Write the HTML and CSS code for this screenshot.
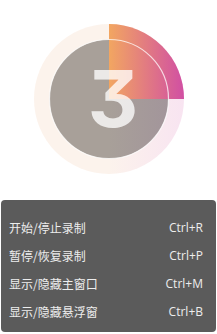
FILE: index.html
```html
<!DOCTYPE html>
<html lang="zh-CN">
<head>
    <meta charset="UTF-8">
    <title>录制倒计时</title>
    <link rel="stylesheet" href="styles.css">
</head>
<body>
    <!-- Countdown dial -->
    <div class="dial-section">
        <svg class="dial" width="150" height="150" viewBox="0 0 150 150">
            <defs>
                <linearGradient id="accent" x1="0" y1="0" x2="150" y2="0" gradientUnits="userSpaceOnUse">
                    <stop offset="0.5" stop-color="#f2a661"/>
                    <stop offset="1" stop-color="#d14fa3"/>
                </linearGradient>
                <linearGradient id="ringFade" x1="0" y1="0" x2="150" y2="0" gradientUnits="userSpaceOnUse">
                    <stop offset="0.5" stop-color="#fcf3ec"/>
                    <stop offset="1" stop-color="#f8e4f1"/>
                </linearGradient>
                <linearGradient id="core" x1="0" y1="0" x2="150" y2="0" gradientUnits="userSpaceOnUse">
                    <stop offset="0.5" stop-color="#a8a099"/>
                    <stop offset="1" stop-color="#a1929b"/>
                </linearGradient>
            </defs>
            <circle cx="75" cy="75" r="75" fill="url(#ringFade)"/>
            <circle cx="75" cy="75" r="59.5" fill="url(#core)"/>
            <path d="M75 75 L75 0 A75 75 0 0 1 150 75 Z" fill="url(#accent)"/>
            <circle cx="75" cy="75" r="59.5" fill="none" stroke="#fff" stroke-opacity="0.75" stroke-width="1.2"/>
            <text class="dial-count" x="79" y="103" text-anchor="middle">3</text>
        </svg>
    </div>

    <!-- Shortcut list -->
    <div class="shortcut-menu">
        <div class="shortcut-row"><span>开始/停止录制</span><span class="keys">Ctrl+R</span></div>
        <div class="shortcut-row"><span>暂停/恢复录制</span><span class="keys">Ctrl+P</span></div>
        <div class="shortcut-row"><span>显示/隐藏主窗口</span><span class="keys">Ctrl+M</span></div>
        <div class="shortcut-row"><span>显示/隐藏悬浮窗</span><span class="keys">Ctrl+B</span></div>
    </div>
</body>
</html>
```

FILE: styles.css
```css
* {
    margin: 0;
    padding: 0;
    box-sizing: border-box;
}

body {
    width: 217px;
    height: 334px;
    background: #fff;
    font-family: "Noto Sans CJK SC", "Noto Sans", sans-serif;
    overflow: hidden;
}

/* Dial */
.dial-section {
    height: 200px;
    padding-top: 24px;
    display: flex;
    justify-content: center;
}

.dial {
    display: block;
    margin-left: 1px;
}

.dial-count {
    font-family: Inter, sans-serif;
    font-size: 78px;
    font-weight: 700;
    font-feature-settings: "cv09";
    fill: #fff;
    fill-opacity: 0.77;
}

/* Shortcut menu */
.shortcut-menu {
    margin: 0 1px;
    height: 132px;
    padding: 13px 13px 0 8px;
    background: #5b5b5b;
    border-radius: 4px;
    color: #ededed;
    font-size: 12px;
}

.shortcut-row {
    height: 28px;
    display: flex;
    justify-content: space-between;
    align-items: center;
}

.keys {
    font-family: "Open Sans", sans-serif;
}
```
